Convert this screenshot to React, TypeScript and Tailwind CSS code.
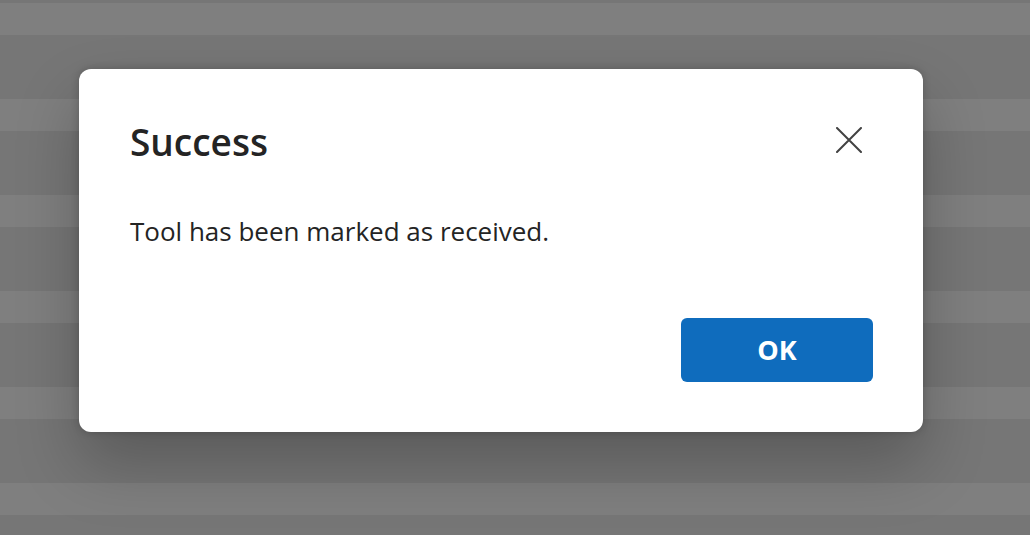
import React from "react";

const bands: { h: number; light: boolean }[] = [{ h: 3, light: false }];
for (let i = 0; i < 6; i++) {
  bands.push({ h: 32, light: true });
  bands.push({ h: 64, light: false });
}

export default function App() {
  return (
    <div className="relative w-[1030px] h-[535px] overflow-hidden bg-[#767676]" style={{ fontFamily: '"Open Sans", "Noto Sans", sans-serif' }}>
      <div className="flex flex-col">
        {bands.map((b, i) => (
          <div key={i} className={b.light ? "bg-[#7f7f7f]" : "bg-[#767676]"} style={{ height: b.h }} />
        ))}
      </div>
      <div className="absolute left-[79px] top-[69px] w-[844px] h-[363px] bg-white rounded-[12px] shadow-[0_0_8px_rgba(0,0,0,0.2),0_32px_64px_rgba(0,0,0,0.24)] flex flex-col pl-[51px] pr-[50px] pt-[48px] pb-[50px] text-[#242424]">
        <div className="flex items-start justify-between">
          <h2 className="text-[37px] leading-[50px] font-semibold">Success</h2>
          <button className="mt-[10px] mr-[11px] w-[26px] h-[26px] flex items-center justify-center">
            <svg width="26" height="26" viewBox="0 0 26 26" fill="none">
              <path d="M1 1L25 25M25 1L1 25" stroke="#424242" strokeWidth="2" strokeLinecap="round" />
            </svg>
          </button>
        </div>
        <p className="mt-[46px] text-[26px] leading-[36px]">Tool has been marked as received.</p>
        <div className="mt-auto flex justify-end">
          <button className="w-[192px] h-[64px] rounded-[6px] bg-[#0f6cbd] text-white text-[27px] font-bold">OK</button>
        </div>
      </div>
    </div>
  );
}
